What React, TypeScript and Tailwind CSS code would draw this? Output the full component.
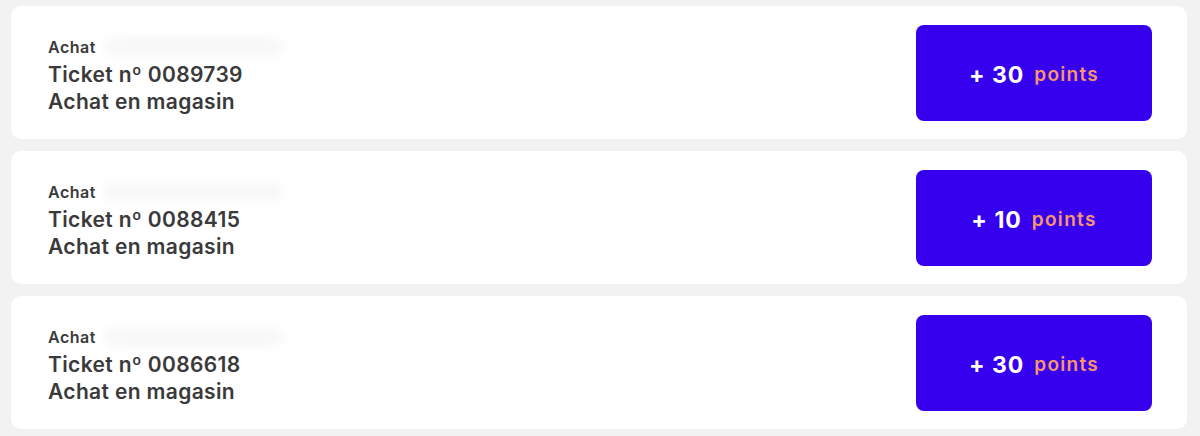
const tickets = [
  { number: '0089739', points: 30 },
  { number: '0088415', points: 10 },
  { number: '0086618', points: 30 },
];

function TicketCard({ number, points }: { number: string; points: number }) {
  return (
    <div className="flex h-[133px] items-center justify-between rounded-[10px] bg-white pl-[37px] pr-[35px]">
      <div className="flex flex-col pt-[6px] text-[#3a3a3a]">
        <div className="flex items-center">
          <span className="text-[16px] font-semibold leading-[20px] tracking-[0.5px]">Achat</span>
          <span className="ml-2 h-[20px] w-[180px] rounded-full bg-[#f8f8f8] blur-[4px]" />
        </div>
        <span className="mt-[4px] text-[21px] font-semibold leading-[27px] tracking-[0.35px]">
          Ticket nº {number}
        </span>
        <span className="text-[21px] font-semibold leading-[27px] tracking-[0.35px]">Achat en magasin</span>
      </div>
      <div className="flex h-[96px] w-[236px] items-center justify-center gap-[10px] rounded-[8px] bg-[#3600ee] pt-[6px]">
        <span className="text-[23px] font-bold tracking-[1px] text-white">+ {points}</span>
        <span className="text-[19px] font-semibold tracking-[1.3px] text-[#f8966c]">points</span>
      </div>
    </div>
  );
}

export default function App() {
  return (
    <div
      className="min-h-[436px] bg-[#f2f2f2] pl-[11px] pr-[13px] pt-[6px]"
      style={{ fontFamily: 'Inter, "Noto Sans", sans-serif' }}
    >
      <div className="flex flex-col gap-[12px]">
        {tickets.map((t) => (
          <TicketCard key={t.number} number={t.number} points={t.points} />
        ))}
      </div>
    </div>
  );
}
